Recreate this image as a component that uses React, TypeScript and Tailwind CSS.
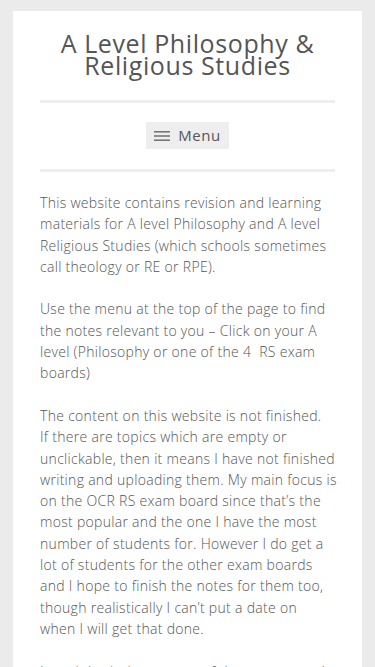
import { useState } from 'react';

// lines kept as in the original page's mobile layout
const paragraphs: string[][] = [
  [
    'This website contains revision and learning',
    'materials for A level Philosophy and A level',
    'Religious Studies (which schools sometimes',
    'call theology or RE or RPE).',
  ],
  [
    'Use the menu at the top of the page to find',
    'the notes relevant to you \u2013 Click on your A',
    'level (Philosophy or one of the 4\u00a0 RS exam',
    'boards)',
  ],
  [
    'The content on this website is not finished.',
    'If there are topics which are empty or',
    'unclickable, then it means I have not finished',
    'writing and uploading them. My main focus is',
    'on the OCR RS exam board since that\u2019s the',
    'most popular and the one I have the most',
    'number of students for. However I do get a',
    'lot of students for the other exam boards',
    'and I hope to finish the notes for them too,',
    'though realistically I can\u2019t put a date on',
    'when I will get that done.',
  ],
  [
    'I teach both the content of the courses and',
    'the exam technique, so feel free to get in touch.',
  ],
];

export default function App() {
  const [open, setOpen] = useState(false);

  return (
    <div className="min-h-screen bg-[#ebebeb] px-[13px] pt-[11px] font-['Open_Sans',sans-serif] text-[#555]">
      <div className="bg-white px-[27px] pb-10">
        {/* Header */}
        <header className="pt-[21px] pb-[24px] text-center">
          <h1 className="text-[25px] leading-[22px] tracking-[0.6px] text-[#555]">
            A Level Philosophy &amp; Religious Studies
          </h1>
        </header>
        <hr className="border-0 h-[3px] bg-[#eee]" />

        {/* Nav */}
        <nav className="flex justify-center pt-[19px] pb-[20px]">
          <button
            onClick={() => setOpen(!open)}
            className="flex items-center gap-[8px] bg-[#eee] h-[27px] px-[8px] text-[15px] text-[#555] tracking-[0.5px]"
          >
            <svg width="16" height="10" viewBox="0 0 16 10" className="text-[#777]">
              <rect y="0" width="16" height="1.6" fill="currentColor" />
              <rect y="4.2" width="16" height="1.6" fill="currentColor" />
              <rect y="8.4" width="16" height="1.6" fill="currentColor" />
            </svg>
            Menu
          </button>
        </nav>
        <hr className="border-0 h-[3px] bg-[#eee]" />

        {/* Content */}
        <div className="pt-[20px] text-[14px] font-light leading-[21.3px] tracking-[0.3px]">
          {paragraphs.map((lines, i) => (
            <p key={i} className="mb-[21.3px]">
              {lines.map((l, j) => (
                <span key={j} className="block whitespace-nowrap">
                  {l}
                </span>
              ))}
            </p>
          ))}
        </div>
      </div>
    </div>
  );
}
